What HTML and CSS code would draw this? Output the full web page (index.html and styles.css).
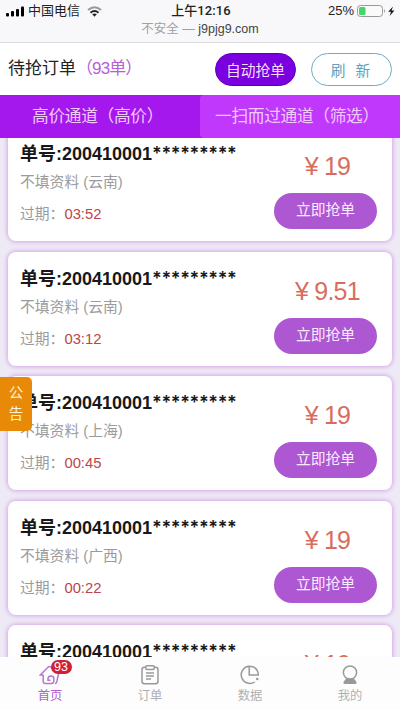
FILE: index.html
```html
<!DOCTYPE html>
<html lang="zh-CN">
<head>
<meta charset="utf-8">
<title>待抢订单</title>
<link rel="stylesheet" href="styles.css">
</head>
<body>
<div class="phone">
  <header class="browser">
    <div class="status">
      <div class="carrier">
        <svg class="signal" width="18" height="11" viewBox="0 0 18 11"><rect x="0" y="7" width="3" height="3.5" rx="1"/><rect x="5" y="5" width="3" height="5.5" rx="1"/><rect x="10" y="3" width="3" height="7.5" rx="1"/><rect x="15" y="0.5" width="3" height="10" rx="1"/></svg>
        <span class="carrier-name">中国电信</span>
        <svg class="wifi" width="15" height="11" viewBox="0 0 15 11"><path class="faint" d="M1 4.1Q7.5-1.6 14 4.1" stroke-width="2"/><path d="M3.5 6.7Q7.5 3.2 11.5 6.7" stroke-width="1.9"/><path class="solid" d="M5.2 8.3Q7.5 6.6 9.8 8.3L7.5 10.7Z"/></svg>
      </div>
      <span class="clock">上午12:16</span>
      <div class="power">
        <span>25%</span>
        <svg width="39" height="14" viewBox="0 0 39 14"><rect x=".5" y="1.5" width="25" height="11" rx="3" fill="#fafafa" stroke="#999"/><rect x="2" y="3" width="6.5" height="8" rx="1.5" fill="#45d568"/><path d="M27 5q2 2 0 4z" fill="#999"/><path d="M36 2.5L31.2 7.8H34L32.7 12L37.4 6.5H34.5Z" fill="#111"/></svg>
      </div>
    </div>
    <div class="address"><span>不安全 — </span><b>j9pjg9.com</b></div>
  </header>
  <section class="heading">
    <h1>待抢订单</h1><span class="count">（93单）</span>
    <button class="auto">自动抢单</button>
    <button class="refresh">刷&nbsp; 新</button>
  </section>
  <nav class="channels"><div class="channel high">高价通道（高价）</div><div class="channel sweep">一扫而过通道（筛选）</div></nav>
  <main class="orders">
    <div class="track">
      <article class="order"><div class="info"><h2>单号:200410001<i>*********</i></h2><p>不填资料 (云南)</p><p class="due">过期：<em>03:52</em></p></div><div class="action"><div class="price"><span>¥</span>19</div><button>立即抢单</button></div></article>
      <article class="order"><div class="info"><h2>单号:200410001<i>*********</i></h2><p>不填资料 (云南)</p><p class="due">过期：<em>03:12</em></p></div><div class="action"><div class="price"><span>¥</span>9.51</div><button>立即抢单</button></div></article>
      <article class="order"><div class="info"><h2>单号:200410001<i>*********</i></h2><p>不填资料 (上海)</p><p class="due">过期：<em>00:45</em></p></div><div class="action"><div class="price"><span>¥</span>19</div><button>立即抢单</button></div></article>
      <article class="order"><div class="info"><h2>单号:200410001<i>*********</i></h2><p>不填资料 (广西)</p><p class="due">过期：<em>00:22</em></p></div><div class="action"><div class="price"><span>¥</span>19</div><button>立即抢单</button></div></article>
      <article class="order"><div class="info"><h2>单号:200410001<i>*********</i></h2></div><div class="action"><div class="price"><span>¥</span>19</div></div></article>
    </div>
  </main>
  <footer class="tabs">
    <div class="tab active"><svg width="22" height="20" viewBox="0 0 22 20"><path d="M4.5 10H1.3L9 2.2Q10.5 .8 12 2.2L17 7M19.5 9L18.3 14Q18 18.5 16 18.5M4.2 10V16.5Q4.2 18.5 6.2 18.5H12.5Q14.8 18.5 14.8 16V13.5Q14.8 11 12 11T9 13.5V15.2H11.5"/></svg><span class="badge">93</span><span>首页</span></div>
    <div class="tab"><svg width="22" height="20" viewBox="0 0 22 20"><rect x="3" y="2.3" width="16" height="16.5" rx="2.5"/><rect class="paper" x="6.7" y=".8" width="8.6" height="3.7" rx="1.5"/><path d="M7 8H15M7 11H15M7 14H12"/></svg><span>订单</span></div>
    <div class="tab"><svg width="22" height="20" viewBox="0 0 22 20"><path d="M9.5 1.2A8.7 8.7 0 1 0 15.8 17M10.2 1.2V10H19.3Q19 1.5 10.2 1.2Z"/><circle class="fill" cx="18.3" cy="14" r="1.3"/></svg><span>数据</span></div>
    <div class="tab"><svg width="22" height="20" viewBox="0 0 22 20"><circle cx="11" cy="7.5" r="6.6"/><path class="fill" d="M7.1 13.5H14.9L17.5 17Q18 19 16.5 19H5.5Q4 19 4.5 17Z"/></svg><span>我的</span></div>
  </footer>
  <aside class="notice">公<br>告</aside>
</div>
</body>
</html>
```
FILE: styles.css
```css
* { box-sizing: border-box; }
body { margin: 0; font-family: "Liberation Sans", "Noto Sans CJK SC", sans-serif; }
h1, h2, p { margin: 0; }
button { font: inherit; padding: 0; }
.phone { position: relative; width: 400px; height: 710px; overflow: hidden; display: flex; flex-direction: column; background: #fff; }
.browser { height: 43px; flex: none; background: #f8f8fa; border-bottom: 1px solid #dcdcde; color: #222; }
.status { display: grid; grid-template-columns: 1fr auto 1fr; height: 21px; align-items: center; padding: 1px 4px 0 6px; font-size: 13px; line-height: 20px; }
.carrier, .power { display: flex; align-items: center; }
.carrier-name { margin: 0 7px 0 4px; }
.wifi { fill: none; stroke: #222; }
.wifi .solid { fill: #222; stroke: none; }
.wifi .faint { stroke: #999; }
.clock { font-weight: 500; font-family: Roboto, "Noto Sans CJK SC", sans-serif; font-size: 13px; letter-spacing: .1px; }
.power { justify-content: flex-end; gap: 3px; font-size: 13px; }
.address { font-size: 12.5px; line-height: 16px; text-align: center; color: #a0a0a3; white-space: pre; }
.address b { color: #444; font-weight: 400; }
.heading { height: 52px; flex: none; display: flex; align-items: center; padding: 0 8px; color: #222; }
h1 { font-size: 17px; line-height: 24px; font-weight: 400; }
.count { font-size: 17px; line-height: 24px; color: #b660d6; letter-spacing: -.9px; }
.heading button { width: 81px; height: 33px; border-radius: 17px; font-size: 14.7px; }
.auto { margin-left: auto; border: 1px solid #5d00b5; background: #7a00df; color: #f5dcff; }
.heading .refresh { margin-left: 15px; border: 1px solid #75a9bf; background: #fff; color: #62a1bd; word-spacing: 1px; padding-right: 2px; }
.channels { height: 43px; flex: none; display: flex; background: #a418ee; position: relative; z-index: 1; font-size: 16.7px; line-height: 43px; letter-spacing: -.3px; color: #f2c9fc; white-space: nowrap; }
.channel { width: 200px; }
.high { padding-left: 32px; }
.sweep { background: #c038fc; padding-left: 15px; border-radius: 4px 0 0 4px; }
.orders { flex: 1; min-height: 0; overflow: hidden; background: #eeeaf5; }
.track { margin-top: -11px; padding: 0 8px; display: flex; flex-direction: column; gap: 10.4px; }
.order { height: 114.2px; flex: none; display: flex; justify-content: space-between; background: #fff; border-radius: 8px; padding: 15px 15px 0 12px; box-shadow: 0 0 4px 1px #d5a4ea; }
h2 { font-size: 18px; line-height: 24px; color: #181818; white-space: nowrap; }
h2 i { font-style: normal; font-family: Inter, sans-serif; font-size: 18px; font-weight: 600; letter-spacing: -.35px; display: inline-block; line-height: 20px; }
.info p { font-size: 14.8px; line-height: 20px; margin-top: 6px; color: #9b9b9d; }
.info .due { margin-top: 12px; }
em { font-style: normal; color: #bd4548; }
.action { width: 103px; display: flex; flex-direction: column; align-items: center; }
.price { font-family: "Liberation Sans", sans-serif; font-size: 25px; line-height: 30px; margin-top: 9px; margin-left: 4px; color: #d96d5d; letter-spacing: -.7px; white-space: nowrap; }
.price span { margin-right: 6px; }
.action button { width: 103px; height: 36px; flex: none; margin-top: 12px; border: 0; border-radius: 18px; background: #ae57d3; color: #faeaff; font-size: 14.8px; line-height: 35px; padding-bottom: 1px; }
.tabs { height: 53px; flex: none; display: flex; background: #fdfdfd; font-size: 12.3px; color: #b0b0b2; }
.tab { width: 100px; position: relative; display: flex; flex-direction: column; align-items: center; padding-top: 8px; line-height: 22px; }
.tab svg { flex: none; fill: none; stroke: #999; stroke-width: 1.5; }
.tab svg .fill { fill: #999; stroke: none; }
.tab svg .paper { fill: #fff; }
.active { color: #b15dcf; }
.active svg { stroke: #b579cd; }
.badge { position: absolute; left: 50.5px; top: 3px; width: 21px; height: 14px; border-radius: 7px; background: #cf2135; color: #fff; font-size: 12.5px; line-height: 14px; text-align: center; }
.notice { position: absolute; z-index: 2; left: 0; top: 377px; width: 32px; height: 54px; border-radius: 0 5px 5px 0; background: #e88908; color: #fff0cf; font-size: 14.5px; line-height: 21px; text-align: center; padding-top: 6px; }
```
